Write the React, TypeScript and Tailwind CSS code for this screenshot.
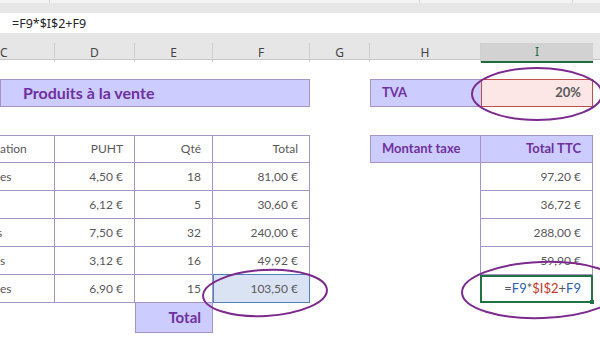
import React from "react";

const cols = "grid grid-cols-[55px_80px_78px_97px_60px_111px_112px_7px]";
const cell = "font-['Lato',sans-serif] text-[12px] text-[#595959] flex items-center";
const bd = "border-[#a794c6]";

type Row = { c: string; cShift?: boolean; d: string; e: string; f: string; i: string };

const rows: Row[] = [
  { c: "es", d: "4,50 €", e: "18", f: "81,00 €", i: "97,20 €" },
  { c: "", d: "6,12 €", e: "5", f: "30,60 €", i: "36,72 €" },
  { c: "s", cShift: true, d: "7,50 €", e: "32", f: "240,00 €", i: "288,00 €" },
  { c: "s", d: "3,12 €", e: "16", f: "49,92 €", i: "59,90 €" },
  { c: "es", d: "6,90 €", e: "15", f: "103,50 €", i: "" },
];

export default function App() {
  return (
    <div className="relative w-[600px] h-[343px] overflow-hidden bg-white">
      {/* top strip */}
      <div className="h-[3px] bg-[#f3f3f3] flex">
        <div className="w-[50px] border-r border-[#d6d6d6]" />
        <div className="w-[370px] border-r border-[#d6d6d6]" />
        <div className="w-[153px] border-r border-[#d6d6d6]" />
      </div>
      <div className="h-[10px] bg-[#e6e6e6]" />
      {/* formula bar */}
      <div className="h-[20px] bg-white flex items-center pt-[2px] pl-[12px] font-['Noto_Sans',sans-serif] text-[12.5px] text-[#262626]">
        =F9*$I$2+F9
      </div>
      <div className="h-[10px] bg-[#e6e6e6]" />
      {/* column headers */}
      <div className={`${cols} h-[17px] bg-[#e6e6e6] border-b border-[#c6c6c6] font-['Noto_Sans',sans-serif] text-[12px] text-[#444]`}>
        {["C", "D", "E", "F", "G", "H"].map((l, idx) => (
          <div
            key={l}
            className={`flex items-center border-r border-[#cfcfcf] ${idx === 0 ? "justify-start pl-0" : "justify-center"}`}
          >
            {l}
          </div>
        ))}
        <div className="flex items-center justify-center bg-[#d2d2d2] border-b-2 border-[#1e6b3c] text-[#1e6b3c] -mb-[1px]">
          I
        </div>
        <div />
      </div>

      {/* row 1 (partial) */}
      <div className="h-[19px]" />
      {/* row 2: title + TVA */}
      <div className={`${cols} h-[28px]`}>
        <div className={`col-span-4 bg-[#ccccff] border ${bd} flex items-center pl-[22px] font-['Lato',sans-serif] font-bold text-[16px] text-[#7030a0]`}>
          Produits à la vente
        </div>
        <div />
        <div className={`bg-[#ccccff] border ${bd} border-r-0 flex items-center pl-[11px] font-['Lato',sans-serif] font-bold text-[13px] text-[#7030a0]`}>
          TVA
        </div>
        <div className={`bg-[#fce6e6] border border-[#c0504d] ${cell} justify-end pr-[11px] text-[13px] font-bold`}>
          20%
        </div>
        <div />
      </div>
      {/* row 3 */}
      <div className="h-[28px]" />
      {/* row 4: headers */}
      <div className={`${cols} h-[28px]`}>
        <div className={`${cell} border-y border-r ${bd} overflow-hidden whitespace-nowrap`}>ation</div>
        <div className={`${cell} border-y border-r ${bd} justify-end pr-[11px]`}>PUHT</div>
        <div className={`${cell} border-y border-r ${bd} justify-end pr-[11px]`}>Qté</div>
        <div className={`${cell} border-y border-r ${bd} justify-end pr-[11px]`}>Total</div>
        <div />
        <div className={`bg-[#ccccff] border ${bd} flex items-center pl-[11px] font-['Lato',sans-serif] font-bold text-[13px] text-[#7030a0]`}>
          Montant taxe
        </div>
        <div className={`bg-[#ccccff] border-y border-r ${bd} flex items-center justify-end pr-[11px] font-['Lato',sans-serif] font-bold text-[13px] text-[#7030a0]`}>
          Total TTC
        </div>
        <div />
      </div>
      {/* data rows */}
      {rows.map((r, idx) => {
        const last = idx === rows.length - 1;
        return (
          <div key={idx} className={`${cols} h-[28px]`}>
            <div className={`${cell} border-b border-r ${bd} overflow-hidden whitespace-nowrap`}>
              <span className={r.cShift ? "-ml-[3px]" : ""}>{r.c}</span>
            </div>
            <div className={`${cell} border-b border-r ${bd} justify-end pr-[11px]`}>{r.d}</div>
            <div className={`${cell} border-b border-r ${bd} justify-end pr-[11px]`}>{r.e}</div>
            {last ? (
              <div className={`${cell} bg-[#dae3f3] border border-[#4f81bd] -mt-[1px] justify-end pr-[11px]`}>{r.f}</div>
            ) : (
              <div className={`${cell} border-b border-r ${bd} justify-end pr-[11px]`}>{r.f}</div>
            )}
            <div />
            <div className={`border-r ${bd}`} />
            {last ? (
              <div className={`${cell} relative border-2 border-[#217346] -ml-[1px] justify-end pr-[10px] text-[13px]`}>
                <span className="text-[#595959]">=</span>
                <span className="text-[#2f5fb3]">F9</span>
                <span className="text-[#595959]">*</span>
                <span className="text-[#c0392b]">$I$2</span>
                <span className="text-[#595959]">+</span>
                <span className="text-[#2f5fb3]">F9</span>
                <div className="absolute -right-[3px] -bottom-[3px] w-[4px] h-[4px] bg-[#217346]" />
              </div>
            ) : (
              <div className={`${cell} border-b border-r ${bd} justify-end pr-[11px]`}>{r.i}</div>
            )}
            <div />
          </div>
        );
      })}
      {/* total row */}
      <div className={`${cols} h-[30px]`}>
        <div />
        <div />
        <div className={`bg-[#ccccff] border-x border-b ${bd} flex items-center justify-end pr-[11px] font-['Lato',sans-serif] font-bold text-[15px] text-[#7030a0]`}>
          Total
        </div>
      </div>

      {/* annotation ellipses */}
      <svg className="absolute left-0 top-0 pointer-events-none" width="600" height="343" viewBox="0 0 600 343">
        <ellipse cx="537" cy="94" rx="65" ry="26" fill="none" stroke="#7d2a8e" strokeWidth="2" />
        <ellipse cx="265" cy="293" rx="62" ry="23" fill="none" stroke="#7d2a8e" strokeWidth="2" transform="rotate(-3 265 293)" />
        <ellipse cx="542" cy="290" rx="80" ry="28" fill="none" stroke="#7d2a8e" strokeWidth="2" transform="rotate(-2 542 290)" />
      </svg>
    </div>
  );
}
